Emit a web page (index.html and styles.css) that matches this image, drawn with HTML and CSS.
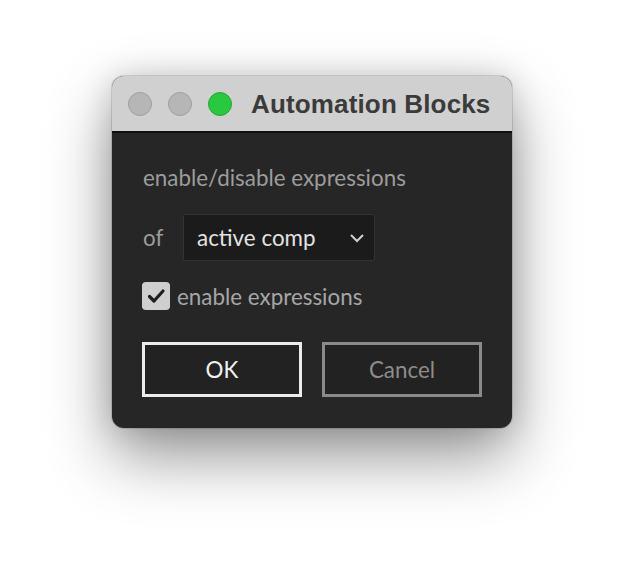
FILE: index.html
```html
<!DOCTYPE html>
<html>
<head>
<meta charset="utf-8">
<link rel="stylesheet" href="styles.css">
</head>
<body>
<div class="window">
  <div class="titlebar">
    <div class="lights">
      <span class="light gray"></span>
      <span class="light gray"></span>
      <span class="light green"></span>
    </div>
    <div class="title">Automation Blocks</div>
  </div>
  <div class="content">
    <div class="label">enable/disable expressions</div>
    <div class="row">
      <span class="of">of</span>
      <div class="select">
        <span>active comp</span>
        <svg class="chev" width="16" height="10" viewBox="0 0 16 10"><path d="M2 2 L8 8 L14 2" fill="none" stroke="#d0d0d0" stroke-width="2"/></svg>
      </div>
    </div>
    <label class="check">
      <span class="box"><svg width="22" height="22" viewBox="0 0 22 22"><path d="M4.5 11.5 L9 16 L18 6" fill="none" stroke="#1e1e1e" stroke-width="3.2" stroke-linecap="round" stroke-linejoin="round"/></svg></span>
      <span class="checktext">enable expressions</span>
    </label>
    <div class="buttons">
      <button class="btn ok">OK</button>
      <button class="btn cancel">Cancel</button>
    </div>
  </div>
</div>
</body>
</html>
```
FILE: styles.css
```css
html, body {
  margin: 0;
  padding: 0;
  background: #ffffff;
}
body {
  width: 624px;
  height: 576px;
  overflow: hidden;
}
.window {
  width: 400px;
  height: 352px;
  margin: 76px auto 0;
  border-radius: 12px;
  overflow: hidden;
  background: #262626;
  box-shadow: 0 0 0 1px rgba(0,0,0,0.12), 0 28px 64px rgba(0,0,0,0.42), 0 0 30px rgba(0,0,0,0.15);
  display: flex;
  flex-direction: column;
}
.titlebar {
  height: 55px;
  background: #d0d0d0;
  border-bottom: 2px solid #111;
  display: flex;
  align-items: center;
  padding-left: 16px;
  box-sizing: content-box;
}
.lights {
  display: flex;
  gap: 16px;
}
.light {
  width: 22px;
  height: 22px;
  border-radius: 50%;
  border: 1px solid #9e9e9e;
  background: #b6b6b6;
}
.light.green {
  background: #2ac840;
  border-color: #22a834;
}
.title {
  margin-left: 19px;
  font-family: "Liberation Sans", Arial, sans-serif;
  font-weight: bold;
  font-size: 26px;
  color: #3b3b3b;
  letter-spacing: 0.15px;
  padding-top: 1px;
}
.content {
  flex: 1;
  padding: 33px 30px 0 30px;
  font-family: Lato, "Open Sans", sans-serif;
  font-size: 22.4px;
  color: #9c9c9c;
}
.label {
  line-height: 24px;
  padding-left: 1px;
}
.row {
  display: flex;
  align-items: center;
  margin-top: 24px;
}
.of {
  width: 40px;
  padding-left: 1px;
}
.select {
  height: 45px;
  background: #1b1b1b;
  border: 1px solid #333;
  border-radius: 2px;
  display: flex;
  align-items: center;
  justify-content: space-between;
  padding: 0 9px 0 13px;
  box-sizing: content-box;
  width: 168px;
  color: #e2e2e2;
}
.check {
  display: flex;
  align-items: center;
  margin-top: 21px;
  gap: 7px;
}
.box {
  width: 28px;
  height: 28px;
  border-radius: 4px;
  background: #cfcfcf;
  display: flex;
  align-items: center;
  justify-content: center;
}
.box svg { display: block; }
.checktext {
  color: #a6a6a6;
}
.buttons {
  display: flex;
  gap: 20px;
  margin-top: 32px;
}
.btn {
  width: 160px;
  height: 55px;
  background: #222;
  font-family: Lato, "Open Sans", sans-serif;
  font-size: 22.4px;
  padding: 0;
  border-radius: 0;
}
.btn.ok {
  border: 3px solid #ececec;
  color: #f0f0f0;
}
.btn.cancel {
  border: 3px solid #8a8a8a;
  color: #8c8c8c;
}
```
